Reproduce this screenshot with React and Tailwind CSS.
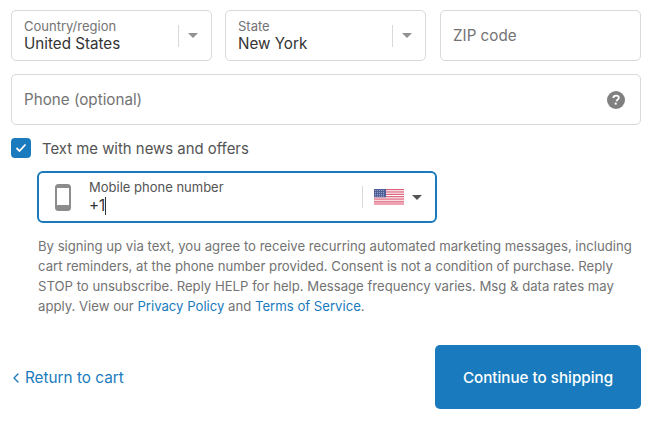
import { ChevronLeft } from 'lucide-react'

const font = { fontFamily: 'Inter, "Noto Sans", sans-serif' }

function Caret({ className }) {
  return (
    <svg width="10" height="5" viewBox="0 0 10 5" className={className}>
      <path d="M0 0h10L5 5z" fill="currentColor" />
    </svg>
  )
}

function SelectField({ label, value }) {
  return (
    <div className="flex items-center w-[201px] h-[51px] border border-[#d9d9d9] rounded-[5px] pl-[12px] pr-[13px]">
      <div className="flex-1 min-w-0">
        <div className="text-[13px] leading-[16px] text-[#737373]">{label}</div>
        <div className="text-[15.2px] leading-[20px] text-[#333333]">{value}</div>
      </div>
      <div className="w-px h-[22px] bg-[#d9d9d9] mr-[9px]"></div>
      <Caret className="text-[#919191]" />
    </div>
  )
}

function UsFlag() {
  const stripes = [0, 2, 4, 6, 8, 10, 12]
  return (
    <svg width="30" height="16" viewBox="0 0 30 16">
      <rect width="30" height="16" fill="#fff" />
      {stripes.map((y) => (
        <rect key={y} x="0" y={y * 1.18} width="30" height="1.23" fill="#dc5f78" />
      ))}
      <rect y="12.5" width="30" height="3.5" fill="#eea3b2" />
      <rect width="12" height="8.3" fill="#4f5f98" />
      <path d="M1 1.5h10M1 3.5h10M1 5.5h10M1 7.2h10" stroke="#b9c1dc" strokeWidth="0.7" strokeDasharray="1 1" />
    </svg>
  )
}

export default function App() {
  return (
    <div className="w-[660px] h-[429px] bg-white overflow-hidden px-[11px] pt-[10px]" style={font}>
      <div className="flex gap-[13px] w-[630px]">
        <SelectField label="Country/region" value="United States" />
        <SelectField label="State" value="New York" />
        <div className="flex items-center h-[51px] flex-1 ml-px border border-[#d9d9d9] rounded-[5px] pl-[12px] pt-[2px] text-[15.2px] text-[#737373]">
          ZIP code
        </div>
      </div>

      <div className="flex items-center justify-between h-[51px] w-[630px] mt-[13px] border border-[#d9d9d9] rounded-[5px] pl-[12px] pr-[15px] text-[15.2px] text-[#737373]">
        <span className="pt-[2px]">Phone (optional)</span>
        <svg width="18" height="18" viewBox="0 0 18 18">
          <circle cx="9" cy="9" r="9" fill="#808080" />
          <path d="M6.3 7c.1-1.6 1.2-2.4 2.8-2.4 1.6 0 2.7.9 2.7 2.2 0 1-.5 1.5-1.3 2-.7.5-.9.7-.9 1.5" fill="none" stroke="#fff" strokeWidth="1.8" />
          <rect x="7.7" y="11.6" width="2" height="2" fill="#fff" />
        </svg>
      </div>

      <div className="flex items-center mt-[13px] h-[20px]">
        <div className="flex items-center justify-center w-[20px] h-[20px] rounded-[4px] bg-[#197bbd]">
          <svg width="12" height="10" viewBox="0 0 12 10">
            <path d="M1.5 5l3 3 6-6.5" fill="none" stroke="#fff" strokeWidth="1.8" />
          </svg>
        </div>
        <span className="ml-[11px] pt-[2px] text-[14.9px] text-[#545454]">Text me with news and offers</span>
      </div>

      <div className="flex items-center w-[400px] h-[52px] mt-[13px] ml-[26px] border-2 border-[#197bbd] rounded-[6px] pl-[16px] pr-[12px]">
        <svg width="16" height="27" viewBox="0 0 16 27" className="shrink-0">
          <rect x="1" y="1" width="14" height="25" rx="2.5" fill="none" stroke="#8c8c8c" strokeWidth="2" />
          <rect x="1" y="21" width="14" height="5" rx="2" fill="#8c8c8c" />
          <rect x="1" y="2" width="14" height="2" fill="#8c8c8c" />
        </svg>
        <div className="ml-[18px] flex-1 min-w-0 pt-px">
          <div className="text-[13px] leading-[16px] text-[#545454]">Mobile phone number</div>
          <div className="flex items-center text-[15.2px] leading-[21px] text-[#333333]">
            +1<span className="inline-block w-px h-[18px] bg-[#333333]"></span>
          </div>
        </div>
        <div className="w-px h-[22px] bg-[#d9d9d9] mr-[11px]"></div>
        <UsFlag />
        <Caret className="ml-[8px] mr-px text-[#545454]" />
      </div>

      <p className="mt-[13px] ml-[27px] w-[600px] text-[13.15px] leading-[20px] text-[#737373]">
        By signing up via text, you agree to receive recurring automated marketing messages, including cart reminders, at the phone number provided. Consent is not a condition of purchase. Reply STOP to unsubscribe. Reply HELP for help. Message frequency varies. Msg &amp; data rates may apply. View our <a className="text-[#197bbd]">Privacy Policy</a> and <a className="text-[#197bbd]">Terms of Service</a>.
      </p>

      <div className="flex items-center justify-between w-[630px] mt-[29px]">
        <a className="flex items-center pt-[2px] text-[15.3px] text-[#197bbd]">
          <ChevronLeft size={16} strokeWidth={2} className="-ml-[3px]" />
          <span className="ml-[1px]">Return to cart</span>
        </a>
        <button className="w-[206px] h-[64px] pt-[2px] rounded-[5px] bg-[#197bbd] text-white text-[15.2px] font-medium">
          Continue to shipping
        </button>
      </div>
    </div>
  )
}
